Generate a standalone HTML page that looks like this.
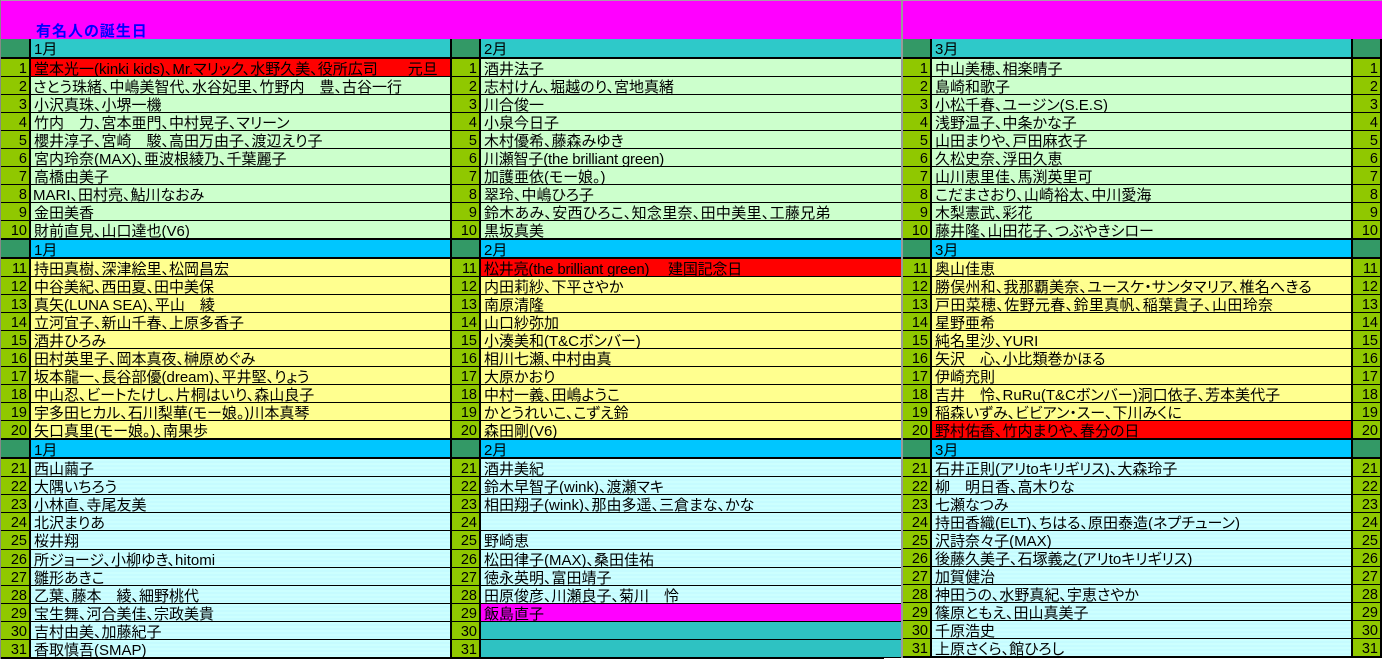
<!DOCTYPE html>
<html lang="ja"><head><meta charset="utf-8">
<style>
html,body{margin:0;padding:0;background:#fff;}
body{position:relative;width:1384px;height:659px;overflow:hidden;font-family:"Liberation Sans","Noto Sans CJK JP",sans-serif;font-size:15px;color:#000;font-feature-settings:"palt";}
#bg{position:absolute;left:0;top:0;width:1382px;height:659px;background:#000;}
#gl{position:absolute;left:0;top:0;width:1px;height:659px;background:#888;}
#top{position:absolute;left:1px;top:1px;width:1381px;height:38px;background:#f0f;}
#tl{position:absolute;left:0;top:0;width:1382px;height:1px;background:#a9a;}
#sep{position:absolute;left:901px;top:0;width:2px;height:659px;background:#999;}
#title{position:absolute;left:36px;top:23px;line-height:18px;color:#00f;font-weight:700;font-size:15px;letter-spacing:1px;white-space:nowrap;}
#wh{position:absolute;left:884px;top:658px;width:500px;height:1px;background:#fff;}
.c{position:absolute;top:39px;}
.r{display:flex;height:17px;margin-bottom:1px;line-height:21px;white-space:nowrap;}
.h{margin-bottom:2px;}
.t{height:18px;line-height:22px;}
.r b{font-weight:400;font-size:14.5px;background:#90c800;text-align:right;padding-right:2px;box-sizing:border-box;flex:none;}
.r span{flex:none;box-sizing:border-box;padding-left:3px;margin-left:2px;}
.r u{text-decoration:none;flex:none;box-sizing:border-box;margin-left:2px;}
.h b{background:#339966;}
.c1 b{width:28px}.c1 span{width:419px}
.c2 b{width:27px}.c2 span{width:420px}
.c3 b{width:27px}.c3 span{width:419px}
.c3 u{width:27px;background:#90c800;font-size:14.5px;text-align:right;padding-right:2px;}
.c3 .h u{background:#339966;}
.h1 span{background:#2ec9c9;}
.h2 span{background:#00c6ff;}
.g span{background:#ccffcc;}
.y span{background:#ffff8f;}
.a span{background:repeating-linear-gradient(180deg,#ccffff 0,#ccffff 2px,#bff8ff 3px,#ccffff 4px);}
.red span{background:#f00!important;}
.mag span{background:#f0f!important;}
.tl span{background:#2ec2c2!important;}
.tall{height:18px;}
.r span.s{padding-left:2px;}
</style></head><body>
<div id="bg"></div>
<div id="top"></div><div id="tl"></div><div id="gl"></div><div id="sep"></div>
<div id="title">有名人の誕生日</div>
<div id="wh"></div>

<div class="c c1" style="left:1px">
<div class="r h t h1"><b></b><span>1月</span></div>
<div class="r g red"><b>1</b><span>堂本光一(kinki kids)、Mr.マリック、水野久美、役所広司　　元旦</span></div>
<div class="r g"><b>2</b><span class="s">さとう珠緒、中嶋美智代、水谷妃里、竹野内　豊、古谷一行</span></div>
<div class="r g"><b>3</b><span>小沢真珠、小堺一機</span></div>
<div class="r g"><b>4</b><span>竹内　力、宮本亜門、中村晃子、マリーン</span></div>
<div class="r g"><b>5</b><span>櫻井淳子、宮崎　駿、高田万由子、渡辺えり子</span></div>
<div class="r g"><b>6</b><span>宮内玲奈(MAX)、亜波根綾乃、千葉麗子</span></div>
<div class="r g"><b>7</b><span>高橋由美子</span></div>
<div class="r g"><b>8</b><span class="s">MARI、田村亮、鮎川なおみ</span></div>
<div class="r g"><b>9</b><span>金田美香</span></div>
<div class="r g h"><b style="background:#90c800">10</b><span>財前直見、山口達也(V6)</span></div>
<div class="r h h2"><b></b><span>1月</span></div>
<div class="r y"><b>11</b><span>持田真樹、深津絵里、松岡昌宏</span></div>
<div class="r y"><b>12</b><span>中谷美紀、西田夏、田中美保</span></div>
<div class="r y"><b>13</b><span>真矢(LUNA SEA)、平山　綾</span></div>
<div class="r y"><b>14</b><span>立河宜子、新山千春、上原多香子</span></div>
<div class="r y"><b>15</b><span>酒井ひろみ</span></div>
<div class="r y"><b>16</b><span>田村英里子、岡本真夜、榊原めぐみ</span></div>
<div class="r y"><b>17</b><span>坂本龍一、長谷部優(dream)、平井堅、りょう</span></div>
<div class="r y"><b>18</b><span>中山忍、ビートたけし、片桐はいり、森山良子</span></div>
<div class="r y"><b>19</b><span>宇多田ヒカル、石川梨華(モー娘。)川本真琴</span></div>
<div class="r y h"><b style="background:#90c800">20</b><span>矢口真里(モー娘。)、南果歩</span></div>
<div class="r h h2"><b></b><span>1月</span></div>
<div class="r a"><b>21</b><span>西山繭子</span></div>
<div class="r a"><b>22</b><span>大隅いちろう</span></div>
<div class="r a"><b>23</b><span>小林直、寺尾友美</span></div>
<div class="r a"><b>24</b><span>北沢まりあ</span></div>
<div class="r a tall"><b>25</b><span>桜井翔</span></div>
<div class="r a"><b>26</b><span>所ジョージ、小柳ゆき、hitomi</span></div>
<div class="r a"><b>27</b><span>雛形あきこ</span></div>
<div class="r a"><b>28</b><span>乙葉、藤本　綾、細野桃代</span></div>
<div class="r a"><b>29</b><span>宝生舞、河合美佳、宗政美貴</span></div>
<div class="r a"><b>30</b><span>吉村由美、加藤紀子</span></div>
<div class="r a"><b>31</b><span>香取慎吾(SMAP)</span></div>
</div>

<div class="c c2" style="left:452px">
<div class="r h t h1"><b></b><span>2月</span></div>
<div class="r g"><b>1</b><span>酒井法子</span></div>
<div class="r g"><b>2</b><span>志村けん、堀越のり、宮地真緒</span></div>
<div class="r g"><b>3</b><span>川合俊一</span></div>
<div class="r g"><b>4</b><span>小泉今日子</span></div>
<div class="r g"><b>5</b><span>木村優希、藤森みゆき</span></div>
<div class="r g"><b>6</b><span style="letter-spacing:-.2px">川瀬智子(the brilliant green)</span></div>
<div class="r g"><b>7</b><span>加護亜依(モー娘。)</span></div>
<div class="r g"><b>8</b><span>翠玲、中嶋ひろ子</span></div>
<div class="r g"><b>9</b><span style="letter-spacing:.3px">鈴木あみ、安西ひろこ、知念里奈、田中美里、工藤兄弟</span></div>
<div class="r g h"><b style="background:#90c800">10</b><span>黒坂真美</span></div>
<div class="r h h2"><b></b><span>2月</span></div>
<div class="r y red"><b>11</b><span style="letter-spacing:-.2px">松井亮(the brilliant green)　&nbsp;建国記念日</span></div>
<div class="r y"><b>12</b><span>内田莉紗、下平さやか</span></div>
<div class="r y"><b>13</b><span>南原清隆</span></div>
<div class="r y"><b>14</b><span>山口紗弥加</span></div>
<div class="r y"><b>15</b><span>小湊美和(T&amp;Cボンバー)</span></div>
<div class="r y"><b>16</b><span>相川七瀬、中村由真</span></div>
<div class="r y"><b>17</b><span>大原かおり</span></div>
<div class="r y"><b>18</b><span>中村一義、田嶋ようこ</span></div>
<div class="r y"><b>19</b><span>かとうれいこ、こずえ鈴</span></div>
<div class="r y h"><b style="background:#90c800">20</b><span>森田剛(V6)</span></div>
<div class="r h h2"><b></b><span>2月</span></div>
<div class="r a"><b>21</b><span>酒井美紀</span></div>
<div class="r a"><b>22</b><span>鈴木早智子(wink)、渡瀬マキ</span></div>
<div class="r a"><b>23</b><span>相田翔子(wink)、那由多遥、三倉まな、かな</span></div>
<div class="r a"><b>24</b><span></span></div>
<div class="r a tall"><b>25</b><span>野崎恵</span></div>
<div class="r a"><b>26</b><span>松田律子(MAX)、桑田佳祐</span></div>
<div class="r a"><b>27</b><span>徳永英明、富田靖子</span></div>
<div class="r a"><b>28</b><span>田原俊彦、川瀬良子、菊川　怜</span></div>
<div class="r a mag"><b>29</b><span>飯島直子</span></div>
<div class="r a tl"><b>30</b><span></span></div>
<div class="r a tl"><b>31</b><span></span></div>
</div>

<div class="c c3" style="left:903px">
<div class="r h t h1"><b></b><span>3月</span><u></u></div>
<div class="r g"><b>1</b><span>中山美穂、相楽晴子</span><u>1</u></div>
<div class="r g"><b>2</b><span>島崎和歌子</span><u>2</u></div>
<div class="r g"><b>3</b><span>小松千春、ユージン(S.E.S)</span><u>3</u></div>
<div class="r g"><b>4</b><span>浅野温子、中条かな子</span><u>4</u></div>
<div class="r g"><b>5</b><span>山田まりや、戸田麻衣子</span><u>5</u></div>
<div class="r g"><b>6</b><span>久松史奈、浮田久恵</span><u>6</u></div>
<div class="r g"><b>7</b><span>山川恵里佳、馬渕英里可</span><u>7</u></div>
<div class="r g"><b>8</b><span>こだまさおり、山崎裕太、中川愛海</span><u>8</u></div>
<div class="r g"><b>9</b><span>木梨憲武、彩花</span><u>9</u></div>
<div class="r g h"><b style="background:#90c800">10</b><span>藤井隆、山田花子、つぶやきシロー</span><u style="background:#90c800">10</u></div>
<div class="r h h2"><b></b><span>3月</span><u></u></div>
<div class="r y"><b>11</b><span>奥山佳恵</span><u>11</u></div>
<div class="r y"><b>12</b><span style="letter-spacing:.2px">勝俣州和、我那覇美奈、ユースケ・サンタマリア、椎名へきる</span><u>12</u></div>
<div class="r y"><b>13</b><span style="letter-spacing:.35px">戸田菜穂、佐野元春、鈴里真帆、稲葉貴子、山田玲奈</span><u>13</u></div>
<div class="r y"><b>14</b><span>星野亜希</span><u>14</u></div>
<div class="r y"><b>15</b><span>純名里沙、YURI</span><u>15</u></div>
<div class="r y"><b>16</b><span>矢沢　心、小比類巻かほる</span><u>16</u></div>
<div class="r y"><b>17</b><span>伊崎充則</span><u>17</u></div>
<div class="r y"><b>18</b><span>吉井　怜、RuRu(T&amp;Cボンバー)洞口依子、芳本美代子</span><u>18</u></div>
<div class="r y"><b>19</b><span>稲森いずみ、ビビアン・スー、下川みくに</span><u>19</u></div>
<div class="r y red h"><b style="background:#90c800">20</b><span>野村佑香、竹内まりや、春分の日</span><u style="background:#90c800">20</u></div>
<div class="r h h2"><b></b><span>3月</span><u></u></div>
<div class="r a"><b>21</b><span>石井正則(アリtoキリギリス)、大森玲子</span><u>21</u></div>
<div class="r a"><b>22</b><span>柳　明日香、高木りな</span><u>22</u></div>
<div class="r a"><b>23</b><span>七瀬なつみ</span><u>23</u></div>
<div class="r a"><b>24</b><span>持田香織(ELT)、ちはる、原田泰造(ネプチューン)</span><u>24</u></div>
<div class="r a"><b>25</b><span>沢詩奈々子(MAX)</span><u>25</u></div>
<div class="r a"><b>26</b><span>後藤久美子、石塚義之(アリtoキリギリス)</span><u>26</u></div>
<div class="r a"><b>27</b><span>加賀健治</span><u>27</u></div>
<div class="r a"><b>28</b><span>神田うの、水野真紀、宇恵さやか</span><u>28</u></div>
<div class="r a"><b>29</b><span>篠原ともえ、田山真美子</span><u>29</u></div>
<div class="r a"><b>30</b><span>千原浩史</span><u>30</u></div>
<div class="r a"><b>31</b><span>上原さくら、館ひろし</span><u>31</u></div>
</div>
</body></html>
